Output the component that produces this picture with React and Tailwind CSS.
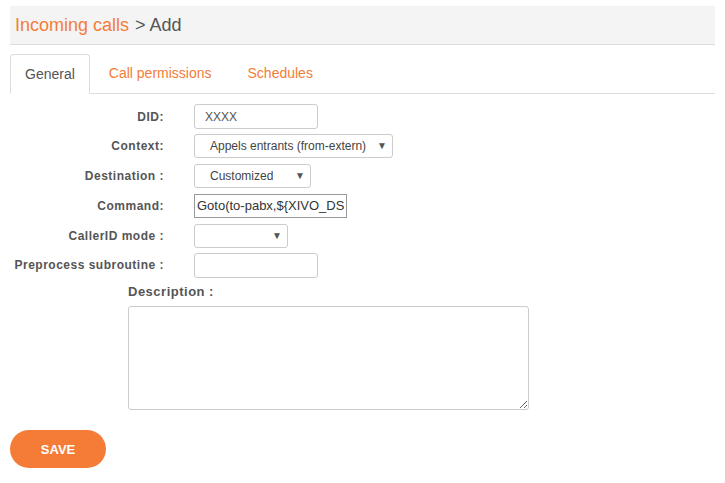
import React from "react";

const orange = "text-[#f47c38]";

function Select({ value, width }) {
  return (
    <div
      className={`${width} h-[24px] flex items-center justify-between border border-[#ccc] rounded-[3px] bg-white pl-[15px] pr-[5px] text-[12px] text-[#444]`}
    >
      <span className="truncate">{value}</span>
      <span className="text-[10px] text-[#555] leading-none">▼</span>
    </div>
  );
}

function Row({ label, children }) {
  return (
    <>
      <div className="text-right text-[12px] font-bold text-[#555] tracking-[0.5px] flex items-center justify-end h-[25px]">
        {label}
      </div>
      <div className="flex items-center h-[25px]">{children}</div>
    </>
  );
}

export default function App() {
  return (
    <div className="px-[10px] pt-[6px] bg-white min-h-[483px] font-['Liberation_Sans',Arial,sans-serif]">
      {/* Header */}
      <div className="h-[39px] bg-[#f4f4f4] border-b border-[#ddd] flex items-center pl-[5px] text-[18px]">
        <span className={orange}>Incoming calls</span>
        <span className="text-[#555] ml-[6px]">&gt; Add</span>
      </div>

      {/* Tabs */}
      <div className="mt-[9px] flex border-b border-[#ddd] text-[14px]">
        <div className="h-[40px] -mb-px px-[14px] flex items-center border border-[#ddd] border-b-white rounded-t-[4px] bg-white text-[#555]">
          General
        </div>
        <div className={`h-[39px] ml-[5px] px-[14px] flex items-center ${orange}`}>
          Call permissions
        </div>
        <div className={`h-[39px] ml-[8px] px-[14px] flex items-center ${orange}`}>
          Schedules
        </div>
      </div>

      {/* Form */}
      <div className="mt-[10px] grid grid-cols-[154px_auto] gap-x-[30px] gap-y-[4.8px]">
        <Row label="DID:">
          <input
            readOnly
            value="XXXX"
            className="w-[124px] h-[25px] border border-[#ccc] rounded-[3px] px-[10px] text-[12px] text-[#555] outline-none"
          />
        </Row>
        <Row label="Context:">
          <Select value="Appels entrants (from-extern)" width="w-[199px]" />
        </Row>
        <Row label="Destination :">
          <Select value="Customized" width="w-[117px]" />
        </Row>
        <Row label="Command:">
          <input
            readOnly
            value="Goto(to-pabx,${XIVO_DSTNUM},)"
            className="w-[153px] h-[24px] border border-[#999] px-[2px] text-[13px] text-[#333] outline-none"
          />
        </Row>
        <Row label="CallerID mode :">
          <Select value="" width="w-[94px]" />
        </Row>
        <Row label="Preprocess subroutine :">
          <input
            readOnly
            className="w-[124px] h-[25px] border border-[#ccc] rounded-[3px] px-[10px] text-[12px] outline-none"
          />
        </Row>
      </div>

      {/* Description */}
      <div className="ml-[118px] mt-[4px]">
        <div className="text-[13px] font-bold text-[#555] tracking-[0.5px]">Description :</div>
        <textarea
          readOnly
          className="block mt-[5px] w-[401px] h-[104px] border border-[#ccc] rounded-[3px] outline-none"
        />
      </div>

      <button className="mt-[20px] w-[96px] h-[38px] rounded-full bg-[#f47c36] text-white text-[13px] font-bold">
        SAVE
      </button>
    </div>
  );
}
